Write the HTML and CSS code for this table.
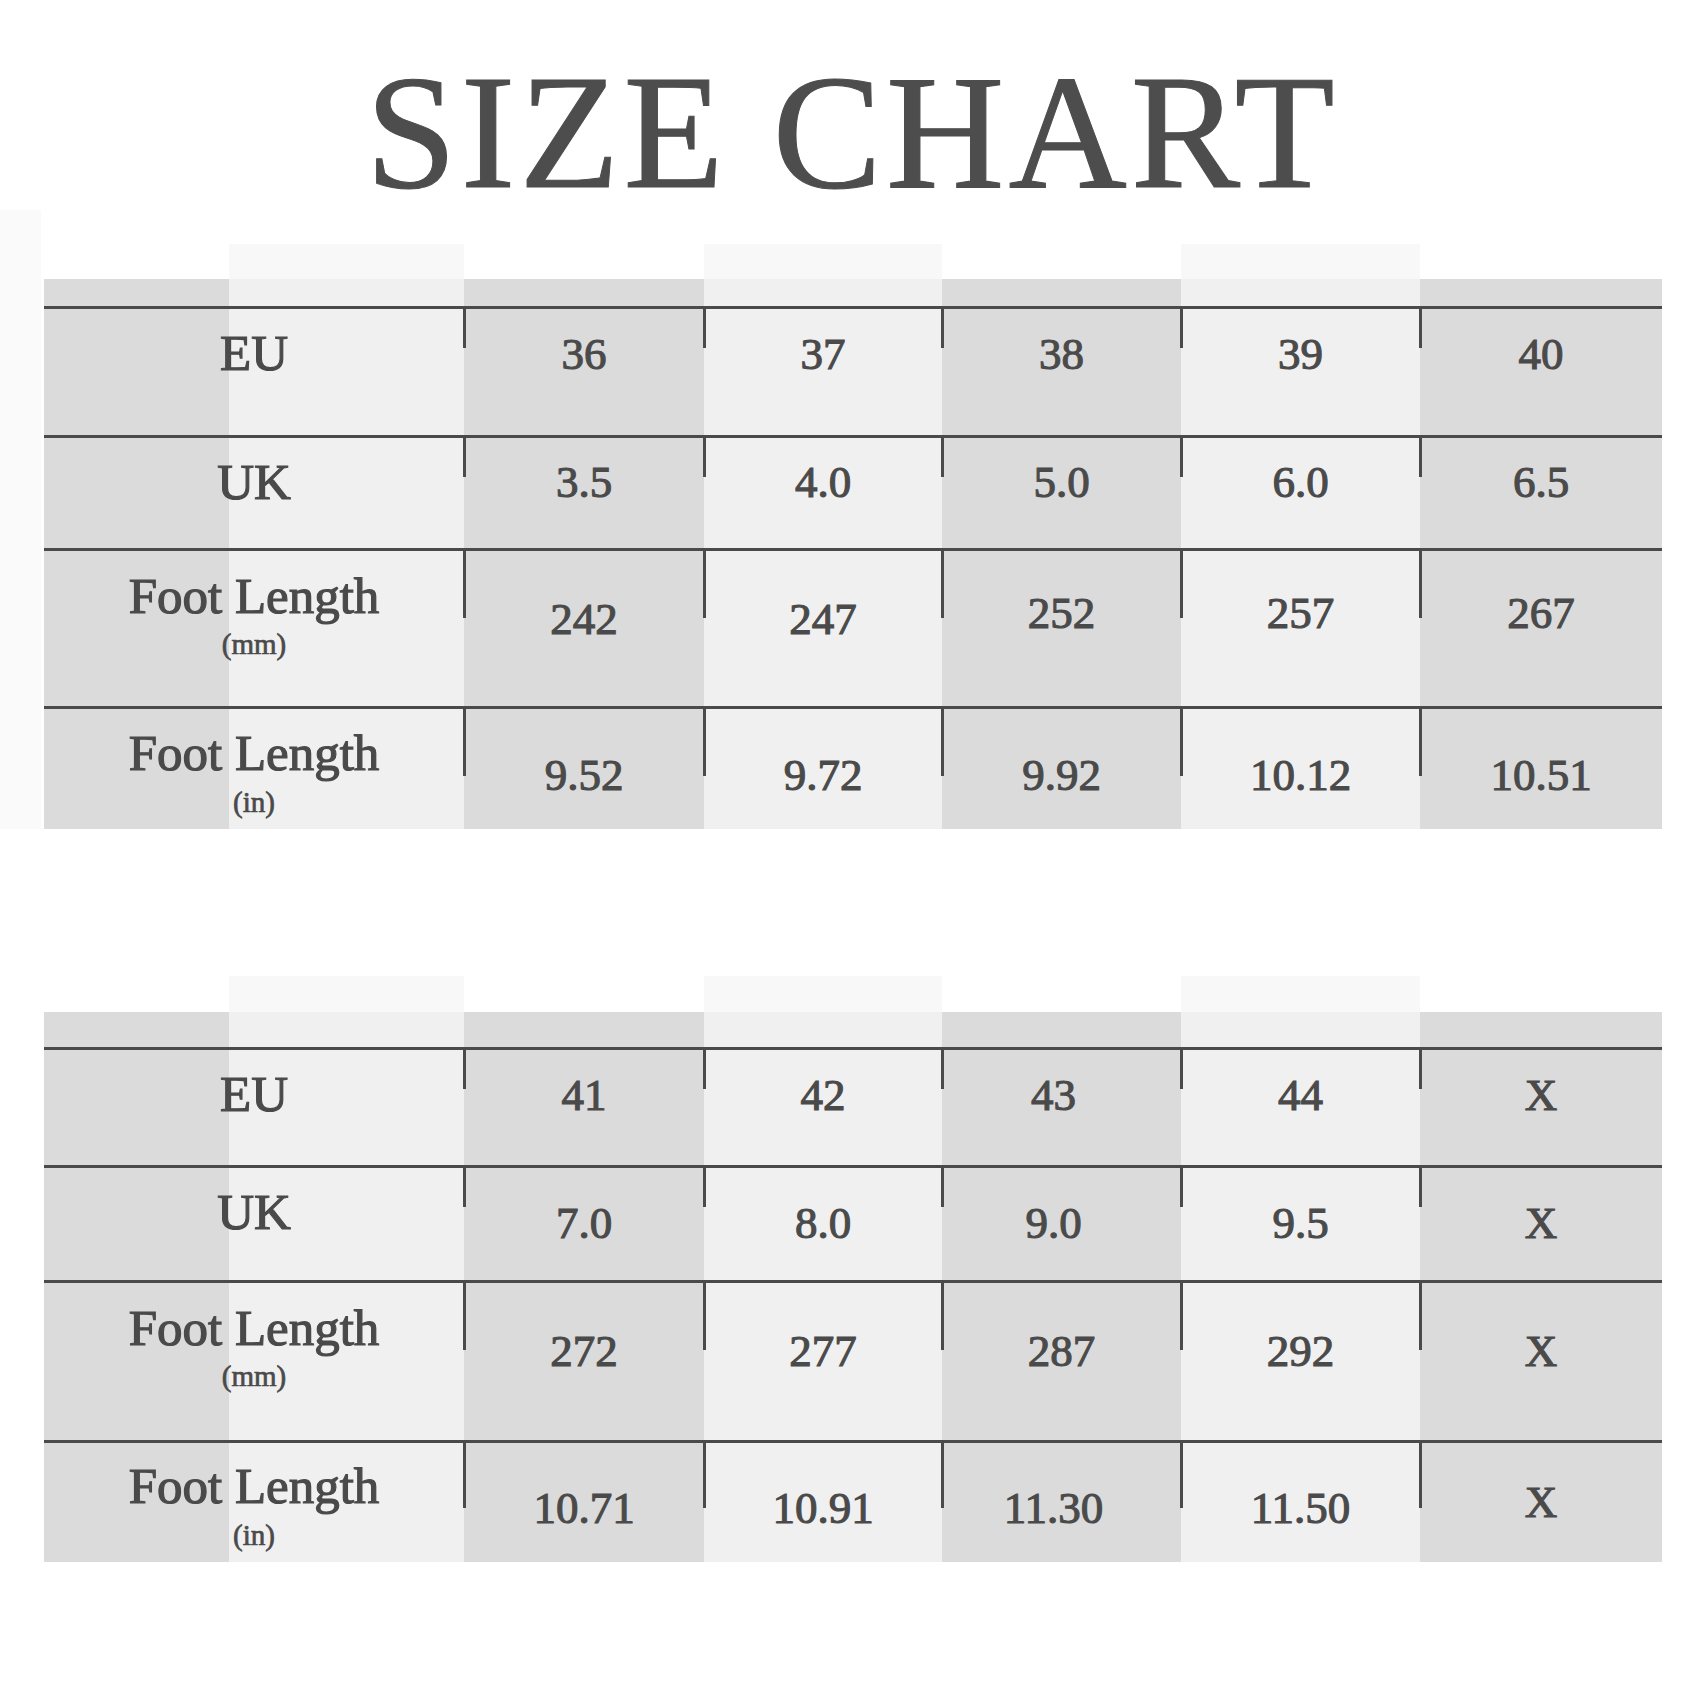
FILE: index.html
```html
<!DOCTYPE html>
<html lang="en">
<head>
<meta charset="utf-8">
<title>Size Chart</title>
<link rel="stylesheet" href="styles.css">
</head>
<body>
<main class="page">
  <h1 class="title">SIZE CHART</h1>

  <section class="chart chart--first">
    <div class="edge"></div>
    <div class="grid grid--first">
      <div class="row row--cap">
        <div class="cap label"></div><div class="cap dark"></div><div class="cap light"></div><div class="cap dark"></div><div class="cap light"></div><div class="cap dark"></div>
      </div>
      <div class="row row--band">
        <div class="band label"></div><div class="band dark"></div><div class="band light"></div><div class="band dark"></div><div class="band light"></div><div class="band dark"></div>
      </div>
      <div class="row row--eu">
        <div class="cell head label"><span class="main">EU</span></div>
        <div class="cell num dark">36</div><div class="cell num light">37</div><div class="cell num dark">38</div><div class="cell num light">39</div><div class="cell num dark">40</div>
      </div>
      <div class="row row--uk">
        <div class="cell head label"><span class="main">UK</span></div>
        <div class="cell num dark">3.5</div><div class="cell num light">4.0</div><div class="cell num dark">5.0</div><div class="cell num light">6.0</div><div class="cell num dark">6.5</div>
      </div>
      <div class="row row--mm">
        <div class="cell head label"><span class="main">Foot Length</span><span class="sub">(mm)</span></div>
        <div class="cell num dark">242</div><div class="cell num light">247</div><div class="cell num dark up">252</div><div class="cell num light up">257</div><div class="cell num dark up">267</div>
      </div>
      <div class="row row--in">
        <div class="cell head label"><span class="main">Foot Length</span><span class="sub">(in)</span></div>
        <div class="cell num dark">9.52</div><div class="cell num light">9.72</div><div class="cell num dark">9.92</div><div class="cell num light">10.12</div><div class="cell num dark">10.51</div>
      </div>
    </div>
  </section>

  <section class="chart chart--second">
    <div class="grid grid--second">
      <div class="row row--cap">
        <div class="cap label"></div><div class="cap dark"></div><div class="cap light"></div><div class="cap dark"></div><div class="cap light"></div><div class="cap dark"></div>
      </div>
      <div class="row row--band">
        <div class="band label"></div><div class="band dark"></div><div class="band light"></div><div class="band dark"></div><div class="band light"></div><div class="band dark"></div>
      </div>
      <div class="row row--eu">
        <div class="cell head label"><span class="main">EU</span></div>
        <div class="cell num dark">41</div><div class="cell num light">42</div><div class="cell num dark shift">43</div><div class="cell num light">44</div><div class="cell num dark">X</div>
      </div>
      <div class="row row--uk">
        <div class="cell head label"><span class="main">UK</span></div>
        <div class="cell num dark">7.0</div><div class="cell num light">8.0</div><div class="cell num dark shift">9.0</div><div class="cell num light">9.5</div><div class="cell num dark">X</div>
      </div>
      <div class="row row--mm">
        <div class="cell head label"><span class="main">Foot Length</span><span class="sub">(mm)</span></div>
        <div class="cell num dark">272</div><div class="cell num light">277</div><div class="cell num dark">287</div><div class="cell num light">292</div><div class="cell num dark">X</div>
      </div>
      <div class="row row--in">
        <div class="cell head label"><span class="main">Foot Length</span><span class="sub">(in)</span></div>
        <div class="cell num dark">10.71</div><div class="cell num light">10.91</div><div class="cell num dark shift">11.30</div><div class="cell num light">11.50</div><div class="cell num dark up">X</div>
      </div>
    </div>
  </section>
</main>
</body>
</html>
```

FILE: styles.css
```css
* {
  box-sizing: border-box;
}

body {
  margin: 0;
  background: #ffffff;
  color: #4a4a4a;
  font-family: "Liberation Serif", "Times New Roman", serif;
}

.page {
  width: 1700px;
  height: 1700px;
}

.title {
  margin: 0;
  padding-top: 53px;
  padding-left: 4px;
  font-size: 164px;
  line-height: 157px;
  letter-spacing: 4px;
  font-weight: normal;
  text-align: center;
  color: #4d4d4d;
  -webkit-text-stroke: 1px #4d4d4d;
}

.chart--first {
  display: flex;
  align-items: flex-end;
}

.edge {
  width: 41px;
  height: 619px;
  margin-right: 3px;
  background: #fafafa;
}

.chart--second {
  margin-top: 147px;
  padding-left: 44px;
}

.grid {
  display: grid;
  grid-template-columns: 420px 240px 238px 239px 239px 242px;
  width: 1618px;
}

.grid--first {
  grid-template-rows: 35px 27px 129px 113px 158px 123px;
}

.grid--second {
  grid-template-rows: 36px 35px 118px 115px 160px 122px;
}

.row {
  display: contents;
}

/* column tones */
.dark {
  background: #dbdbdb;
}

.light {
  background: #f0f0f0;
}

.label {
  background: linear-gradient(to right, #dbdbdb 185px, #f0f0f0 185px);
}

.cap.dark {
  background: transparent;
}

.cap.light {
  background: #f8f8f8;
}

.cap.label {
  background: linear-gradient(to right, transparent 185px, #f8f8f8 185px);
}

/* data cells */
.cell {
  position: relative;
  border-top: 3px solid #4a4a4a;
  text-align: center;
}

.head {
  display: flex;
  flex-direction: column;
  align-items: center;
  padding-top: 19px;
}

.main {
  display: block;
  font-size: 51px;
  line-height: 1;
  white-space: nowrap;
  -webkit-text-stroke: 1.2px #4a4a4a;
}

.sub {
  display: block;
  margin-top: 8px;
  font-size: 29px;
  line-height: 1;
  -webkit-text-stroke: 0.7px #4a4a4a;
}

.num {
  font-size: 45px;
  line-height: 1;
  padding-top: 23px;
  -webkit-text-stroke: 1.1px #4a4a4a;
}

.num::before {
  content: "";
  position: absolute;
  left: -1px;
  top: -3px;
  width: 3px;
  height: 42px;
  background: #4a4a4a;
}

.row--mm .num::before,
.row--in .num::before {
  height: 70px;
}

.shift {
  padding-right: 16px;
}

/* first chart vertical placement */
.row--uk .num {
  padding-top: 22px;
}

.row--mm .head {
  padding-top: 20px;
}

.row--mm .num {
  padding-top: 46px;
}

.row--mm .num.up {
  padding-top: 40px;
}

.row--in .head {
  padding-top: 19px;
}

.row--in .sub {
  margin-top: 9px;
}

.row--in .num {
  padding-top: 44px;
}

/* second chart vertical placement */
.grid--second .row--uk .num {
  padding-top: 33px;
}

.grid--second .row--mm .num {
  padding-top: 46px;
}

.grid--second .row--in .head {
  padding-top: 18px;
}

.grid--second .row--in .sub {
  margin-top: 9px;
}

.grid--second .row--in .num {
  padding-top: 43px;
}

.grid--second .row--in .num.up {
  padding-top: 37px;
}

.grid--second .row--in .num::before {
  height: 68px;
}
```
